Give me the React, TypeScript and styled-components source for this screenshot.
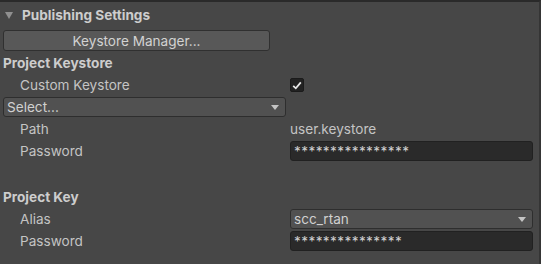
import React from 'react';
import { styled, createGlobalStyle } from 'styled-components';

const GlobalStyle = createGlobalStyle`
  html, body {
    margin: 0;
    padding: 0;
    background: #474747;
  }
  body {
    font-family: Inter, 'Noto Sans', sans-serif;
    font-size: 13.6px;
    color: #c4c4c4;
  }
`;

const Panel = styled.div`
  width: 541px;
  height: 264px;
  box-sizing: border-box;
  background: #474747;
  border-top: 2px solid #2a2a2a;
  border-right: 2px solid #353535;
  overflow: hidden;
  display: flex;
  flex-direction: column;
`;

const Foldout = styled.div`
  height: 26px;
  display: flex;
  align-items: center;
  gap: 9px;
  padding-left: 5px;
  font-weight: 700;
  color: #cdcdcd;
`;

const FoldArrow = styled.span`
  width: 0;
  height: 0;
  border-left: 4px solid transparent;
  border-right: 4px solid transparent;
  border-top: 7px solid #909090;
`;

const Button = styled.button`
  margin: 2px 0 1px 3px;
  width: 267px;
  height: 21px;
  box-sizing: border-box;
  background: #585858;
  border: 1px solid #303030;
  border-radius: 3px;
  color: #d2d2d2;
  font: inherit;
  padding: 0;
`;

const Row = styled.div<{ $indent?: number }>`
  height: 22px;
  display: flex;
  align-items: center;
  padding-left: ${(p) => p.$indent ?? 20}px;
`;

const SectionTitle = styled(Row)`
  font-weight: 700;
  color: #cdcdcd;
`;

const Label = styled.div`
  width: 270px;
  flex-shrink: 0;
`;

const Value = styled.div`
  flex: 1;
  display: flex;
  align-items: center;
  margin-right: 6px;
`;

const Check = styled.div`
  width: 14px;
  height: 14px;
  border-radius: 2px;
  background: #222222;
  border: 1px solid #1b1b1b;
  box-sizing: border-box;
  display: flex;
  align-items: center;
  justify-content: center;
`;

const Dropdown = styled.div<{ $width?: number }>`
  height: 20px;
  box-sizing: border-box;
  ${(p) => (p.$width ? `width: ${p.$width}px;` : 'flex: 1;')}
  background: #515151;
  border: 1px solid #2e2e2e;
  border-radius: 3px;
  display: flex;
  align-items: center;
  justify-content: space-between;
  padding: 0 6px 0 3px;
  color: #d0d0d0;
`;

const DropArrow = styled.span`
  width: 0;
  height: 0;
  border-left: 4px solid transparent;
  border-right: 4px solid transparent;
  border-top: 5px solid #c4c4c4;
`;

const TextField = styled.div`
  flex: 1;
  height: 20px;
  box-sizing: border-box;
  background: #2a2a2a;
  border: 1px solid #212121;
  border-radius: 3px;
  display: flex;
  align-items: center;
  padding-left: 3px;
  color: #cfcfcf;
  letter-spacing: 0.4px;
`;

const Spacer = styled.div`
  height: 24px;
`;

const Checkmark = () => (
  <svg width="10" height="9" viewBox="0 0 10 9">
    <path d="M1.2 4.8 L3.8 7.3 L8.8 1.3" fill="none" stroke="#e6e6e6" strokeWidth="1.8" />
  </svg>
);

const App = () => {
  return (
    <>
      <GlobalStyle />
      <Panel>
        <Foldout>
          <FoldArrow />
          Publishing Settings
        </Foldout>
        <Button>Keystore Manager...</Button>
        <SectionTitle $indent={3}>Project Keystore</SectionTitle>
        <Row>
          <Label>Custom Keystore</Label>
          <Value>
            <Check>
              <Checkmark />
            </Check>
          </Value>
        </Row>
        <Row $indent={3}>
          <Dropdown $width={283}>
            Select...
            <DropArrow />
          </Dropdown>
        </Row>
        <Row>
          <Label>Path</Label>
          <Value>user.keystore</Value>
        </Row>
        <Row>
          <Label>Password</Label>
          <Value>
            <TextField>****************</TextField>
          </Value>
        </Row>
        <Spacer />
        <SectionTitle $indent={3}>Project Key</SectionTitle>
        <Row>
          <Label>Alias</Label>
          <Value>
            <Dropdown>
              scc_rtan
              <DropArrow />
            </Dropdown>
          </Value>
        </Row>
        <Row>
          <Label>Password</Label>
          <Value>
            <TextField>***************</TextField>
          </Value>
        </Row>
      </Panel>
    </>
  );
};

export default App;
